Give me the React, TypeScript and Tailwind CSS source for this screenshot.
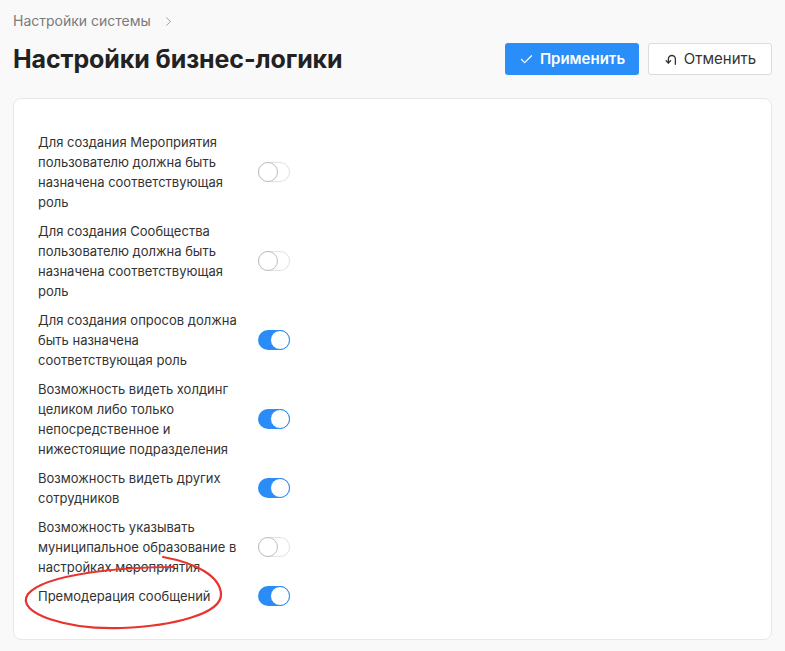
import { Check, ChevronRight } from "lucide-react";

const settings = [
  { label: "Для создания Мероприятия пользователю должна быть назначена соответствующая роль", on: false },
  { label: "Для создания Сообщества пользователю должна быть назначена соответствующая роль", on: false },
  { label: "Для создания опросов должна быть назначена соответствующая роль", on: true },
  { label: "Возможность видеть холдинг целиком либо только непосредственное и нижестоящие подразделения", on: true },
  { label: "Возможность видеть других сотрудников", on: true },
  { label: "Возможность указывать муниципальное образование в настройках мероприятия", on: false },
  { label: "Премодерация сообщений", on: true },
];

function Toggle({ on }: { on: boolean }) {
  return on ? (
    <div className="w-[32px] h-[20px] rounded-full bg-[#2a8cf7] flex items-center justify-end">
      <div className="w-[20px] h-[20px] rounded-full bg-white border border-[#2a8cf7]" />
    </div>
  ) : (
    <div className="w-[32px] h-[20px] rounded-full bg-white border border-[#e2e2e2] flex items-center">
      <div className="w-[20px] h-[20px] -ml-px rounded-full bg-white border border-[#bdbdbd]" />
    </div>
  );
}

function UndoIcon() {
  return (
    <svg width="14" height="14" viewBox="0 0 16 16" fill="none" stroke="currentColor" strokeWidth="1.5" strokeLinecap="round" strokeLinejoin="round">
      <path d="M5 12.5 V8 a4 4 0 0 1 8 0 V14" />
      <path d="M2.5 10 L5 12.5 L7.5 10" />
    </svg>
  );
}

export default function App() {
  return (
    <div
      className="relative min-h-screen bg-[#f9f9f9] px-[13px] pt-[12px] pb-6 text-[#333]"
      style={{ fontFamily: "Inter, 'Noto Sans', sans-serif" }}
    >
      {/* Breadcrumb */}
      <div className="flex items-center gap-[10px] text-[14px] leading-[18px] text-[#7b7b7b]">
        <span>Настройки системы</span>
        <ChevronRight size={15} strokeWidth={1.3} className="text-[#8a8a8a]" />
      </div>

      {/* Header */}
      <div className="flex items-center justify-between mt-[12px]">
        <h1 className="text-[25px] font-bold leading-[34px] text-[#222] tracking-[-0.1px]">
          Настройки бизнес-логики
        </h1>
        <div className="flex items-center gap-[9px]">
          <button className="h-[32px] w-[134px] rounded-[3px] bg-[#2a8ef8] text-white text-[15px] font-semibold flex items-center justify-center gap-[6px]">
            <Check size={15} strokeWidth={2} />
            Применить
          </button>
          <button className="h-[32px] w-[124px] rounded-[3px] bg-white border border-[#dcdcdc] text-[#333] text-[15px] flex items-center justify-center gap-[6px]">
            <UndoIcon />
            Отменить
          </button>
        </div>
      </div>

      {/* Card */}
      <div className="mt-[22px] bg-white border border-[#e8e8e8] rounded-[8px] pl-[24px] pt-[33px] pb-[33px] flex flex-col gap-[9px]">
        {settings.map((s) => (
          <div key={s.label} className="flex items-center">
            <div className="w-[210px] text-[13px] leading-[20px] text-[#333]">{s.label}</div>
            <div className="ml-[10px]">
              <Toggle on={s.on} />
            </div>
          </div>
        ))}
      </div>

      {/* Hand-drawn annotation */}
      <svg
        className="absolute left-0 top-0 pointer-events-none"
        width="785"
        height="651"
        viewBox="0 0 785 651"
      >
        <path
          d="M 174 567 C 120 567, 45 574, 28 594 C 14 614, 70 630, 122 628 C 172 626, 222 614, 221 594 C 220 576, 196 563, 163 557"
          fill="none"
          stroke="#e8342f"
          strokeWidth="2.2"
          strokeLinecap="round"
        />
      </svg>
    </div>
  );
}
